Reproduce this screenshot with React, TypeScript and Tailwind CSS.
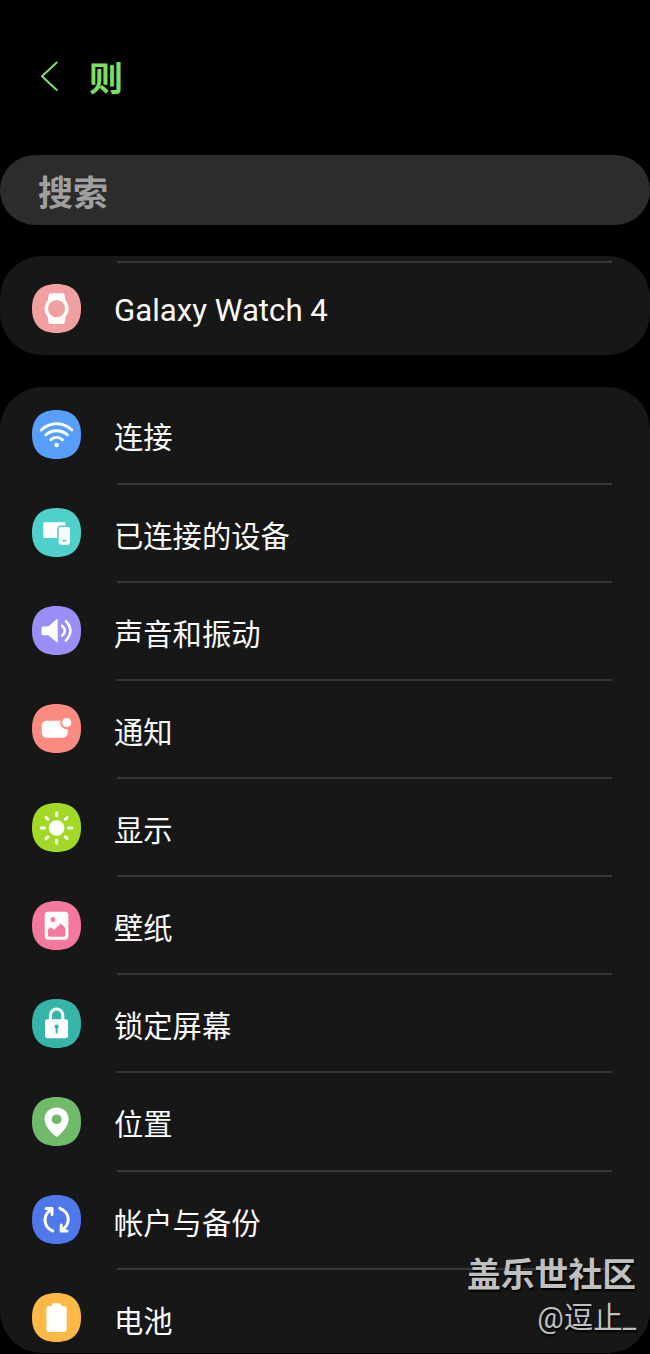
import React from 'react';

const squircle =
  'M24.5 0C40.5 0 49 8.5 49 24.5S40.5 49 24.5 49 0 40.5 0 24.5 8.5 0 24.5 0Z';

const AppIcon = ({ color, children }: { color: string; children: React.ReactNode }) => (
  <svg viewBox="0 0 49 49" className="w-[49px] h-[49px] shrink-0" fill="none">
    <path d={squircle} fill={color} />
    {children}
  </svg>
);

const WatchIcon = () => (
  <AppIcon color="#f0a0a0">
    <path
      d="M18.6 9.3h12q1.8 0 2.1 1.9l.6 4.8v17.4l-.6 4.8q-.3 1.9-2.1 1.9h-12q-1.8 0-2.1-1.9l-.6-4.8V16l.6-4.8q.3-1.9 2.1-1.9Z"
      fill="#fff"
    />
    <circle cx="24.6" cy="24.7" r="12" fill="#fff" />
    <circle cx="24.6" cy="24.7" r="8.6" fill="#f0a0a0" />
  </AppIcon>
);

const items = [
  {
    label: '连接',
    color: '#579ffb',
    glyph: (
      <g stroke="#fff" strokeWidth="2.9" strokeLinecap="round">
        <path d="M9.4 20A21.7 21.7 0 0 1 39.8 20" />
        <path d="M13.8 24.8A16.5 16.5 0 0 1 35.4 24.8" />
        <path d="M18.8 29.8A8.2 8.2 0 0 1 30.4 29.8" />
        <circle cx="24.6" cy="35" r="2.3" fill="#fff" stroke="none" />
      </g>
    ),
  },
  {
    label: '已连接的设备',
    color: '#4fd0cb',
    glyph: (
      <>
        <rect x="11.3" y="14.3" width="22" height="15.8" rx="1.2" fill="#fff" />
        <rect x="25.9" y="18.2" width="12.8" height="19.3" rx="3" fill="#fff" stroke="#4fd0cb" strokeWidth="1.6" />
        <path d="M30.7 32.8h3.2" stroke="#4fd0cb" strokeWidth="1.4" strokeLinecap="round" />
      </>
    ),
  },
  {
    label: '声音和振动',
    color: '#9a8ff9',
    glyph: (
      <>
        <path
          d="M11 20.5h5.3l8.2-7.2q1.2-.8 1.2.6v21.6q0 1.4-1.2.6l-8.2-6.8H11q-1.4 0-1.4-1.4v-6q0-1.4 1.4-1.4Z"
          fill="#fff"
        />
        <path d="M30.1 19.7Q35.4 24.7 30.1 29.7M33.9 15.2Q42.8 24.8 33.9 34.6" stroke="#fff" strokeWidth="2.5" strokeLinecap="round" />
      </>
    ),
  },
  {
    label: '通知',
    color: '#fb8b80',
    glyph: (
      <>
        <rect x="9.7" y="16.7" width="26" height="17" rx="5" fill="#fff" />
        <circle cx="34.7" cy="18.6" r="5.6" fill="#fff" stroke="#fb8b80" strokeWidth="2" />
      </>
    ),
  },
  {
    label: '显示',
    color: '#a2d927',
    glyph: (
      <>
        <circle cx="24.6" cy="25" r="7.8" fill="#fff" />
        <path
          d="M24.6 9.8v3.2M24.6 37v3.2M9.4 25h3.2M36.6 25h3.2M14 14.4l1.9 1.9M33.3 33.7l1.9 1.9M14 35.6l1.9-1.9M33.3 16.3l1.9-1.9"
          stroke="#fff"
          strokeWidth="2.9"
          strokeLinecap="round"
        />
      </>
    ),
  },
  {
    label: '壁纸',
    color: '#f5799f',
    glyph: (
      <>
        <rect x="12.7" y="10.7" width="23.7" height="28" rx="3.6" fill="#fff" />
        <circle cx="20.9" cy="18.4" r="2.5" fill="#f5799f" />
        <path
          d="M15.8 28.8l2-2.1q.8-.8 1.7 0l2.6 2.2 5.7-5.6q.9-.9 1.8 0l3.7 3.8v6.4q0 2.2-2.2 2.2H18q-2.2 0-2.2-2.2Z"
          fill="#f5799f"
        />
      </>
    ),
  },
  {
    label: '锁定屏幕',
    color: '#35b5a8',
    glyph: (
      <>
        <path d="M18.4 22v-5.8a6.2 6.2 0 0 1 12.4 0V22" stroke="#fff" strokeWidth="3" />
        <rect x="13" y="20.3" width="23.1" height="19" rx="2.8" fill="#fff" />
        <circle cx="24.6" cy="27.6" r="2.1" fill="#35b5a8" />
        <path d="M24.6 28v5.4" stroke="#35b5a8" strokeWidth="2" strokeLinecap="round" />
      </>
    ),
  },
  {
    label: '位置',
    color: '#6fbb69',
    glyph: (
      <>
        <path
          d="M24.6 10.6c6.8 0 12 5 12 11.6 0 6.4-5.8 12.6-10.5 16.8q-1.5 1.3-3 0C18.4 34.8 12.6 28.6 12.6 22.2c0-6.6 5.2-11.6 12-11.6Z"
          fill="#fff"
        />
        <circle cx="24.6" cy="22.3" r="4.9" fill="#6fbb69" />
      </>
    ),
  },
  {
    label: '帐户与备份',
    color: '#4f78ea',
    glyph: (
      <g stroke="#fff" strokeWidth="3" strokeLinecap="round" strokeLinejoin="round">
        <path d="M20.7 36Q13 32.8 13 24.6Q13.2 18 19.7 14" />
        <path d="M14.2 13.4H20V19.4" />
        <path d="M28 13.4Q36.2 16.8 36.2 24.8Q36 31.3 29.6 35.3" />
        <path d="M35 36H29.2V30" />
      </g>
    ),
  },
  {
    label: '电池',
    color: '#fdb846',
    glyph: (
      <>
        <rect x="14.4" y="13" width="20.3" height="26" rx="3" fill="#fff" />
        <rect x="20" y="10.2" width="9.3" height="6" rx="1.5" fill="#fff" />
      </>
    ),
  },
];

const Header = () => (
  <header className="flex items-center h-[154px] pl-10">
    <svg viewBox="0 0 20 32" className="w-5 h-8 -mt-0.5" fill="none">
      <path d="M16.7 2.5L2 16.2L16.7 30" stroke="#7be36a" strokeWidth="2" strokeLinecap="round" strokeLinejoin="round" />
    </svg>
    <h1 className="ml-[29px] pt-1 text-[34px] leading-none font-bold text-[#7bdf63]">则</h1>
  </header>
);

const App = () => {
  return (
    <div className="relative w-full h-[1354px] overflow-hidden bg-black text-[#fafafa] font-['Roboto','Noto_Sans_CJK_SC',sans-serif]">
      <Header />

      <div className="flex items-center h-[70px] mt-[0.5px] pl-[38px] pt-2.5 rounded-full bg-[#2c2c2c] text-[35px] leading-none font-bold text-[#9f9f9f]">
        搜索
      </div>

      <section className="mt-[31.5px] h-[99px] pl-8 rounded-[42px] bg-[#171717]">
        <div className="ml-[85px] mr-[38px] pt-[5px] border-b-2 border-[#373737]" />
        <div className="flex items-center h-[91px]">
          <WatchIcon />
          <span className="ml-[33px] pt-1 text-[31.2px] leading-none">Galaxy Watch 4</span>
        </div>
      </section>

      <ul className="mt-8 h-[966px] pl-8 pr-[38px] rounded-[42px] bg-[#171717] overflow-hidden">
        {items.map((item) => (
          <li key={item.label} className="group h-[98.15px] first:-mt-[0.5px] flex">
            <div className="flex items-center pb-0.5">
              <AppIcon color={item.color}>{item.glyph}</AppIcon>
            </div>
            <div className="flex-1 ml-[36px] flex items-center border-b-2 border-[#373737] group-last:border-transparent">
              <span className="-ml-[3px] pt-[9px] text-[29.3px] leading-none">{item.label}</span>
            </div>
          </li>
        ))}
      </ul>

      {/* Community watermark */}
      <div className="absolute right-[14px] bottom-[21px] flex flex-col items-end text-[#c0c0c0] leading-none [text-shadow:1px_2px_2px_#000]">
        <span className="text-[33.8px] font-bold">盖乐世社区</span>
        <span className="mt-[11px] text-[29.5px]">@逗止_</span>
      </div>
    </div>
  );
};

export default App;
